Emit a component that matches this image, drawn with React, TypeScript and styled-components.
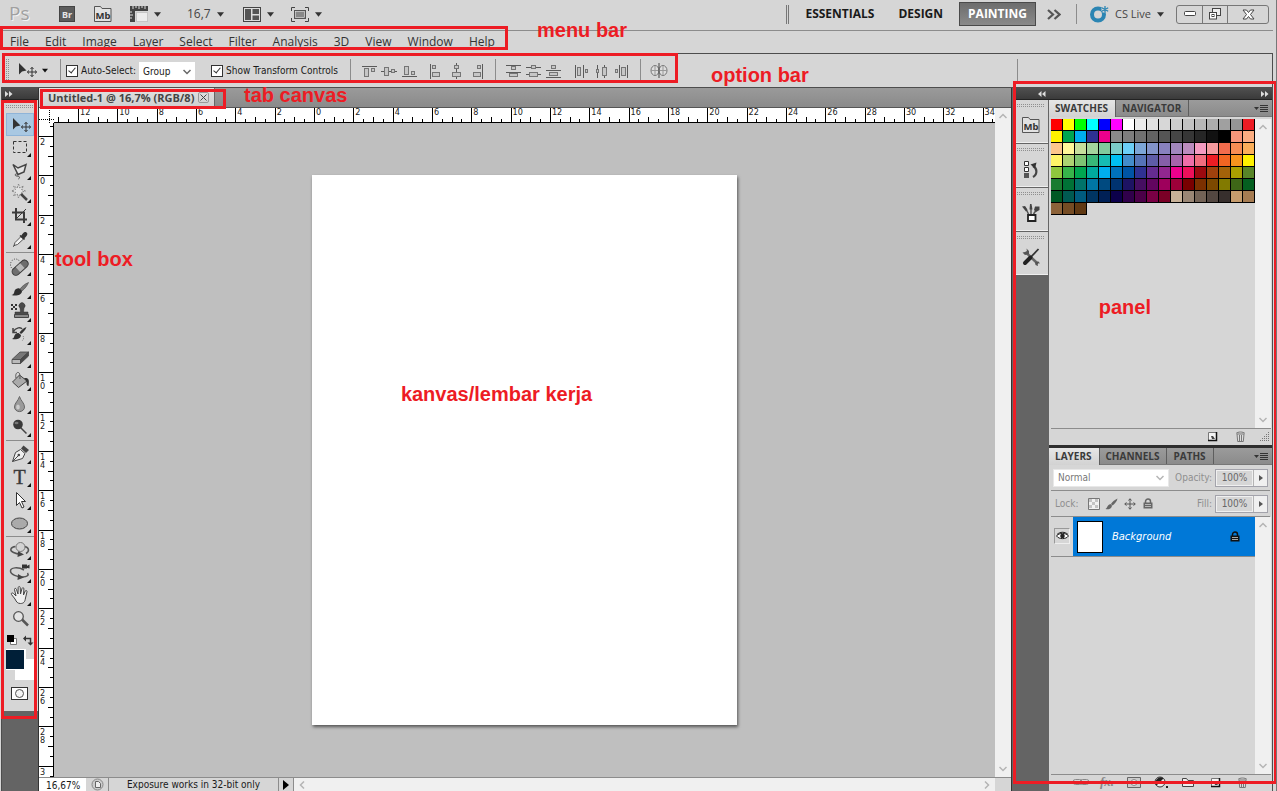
import React from 'react';
import styled, { createGlobalStyle, css } from 'styled-components';

const ui = `'DejaVu Sans Condensed', 'DejaVu Sans', sans-serif`;
const menuFont = `'Open Sans', 'Noto Sans', sans-serif`;
const face = '#d6d6d6';
const line = '#8c8c8c';
const dark = '#4d4d4d';
const mark = '#ed1c24';

const GlobalStyle = createGlobalStyle`
  * { box-sizing: border-box; }
  body { margin: 0; background: ${face}; font-family: ${menuFont}; font-size: 11px; color: #1a1a1a; }
  button, input, select { font: inherit; color: inherit; margin: 0; padding: 0; border: 0; background: none; border-radius: 0; }
  ul { list-style: none; margin: 0; padding: 0; }
  svg { display: block; flex: none; }
`;

/* ---------- frame ---------- */

const Shell = styled.div`
  position: relative;
  height: 100vh;
  min-height: 720px;
  display: flex;
  flex-direction: column;
  padding-right: 3px;
  overflow: hidden;
  background: ${face};
  border-right: 1px solid #777;
`;

const AppBar = styled.header`
  flex: none;
  height: 31px;
  display: flex;
  align-items: center;
  padding: 0 4px 2px 9px;
  border-bottom: 1px solid ${line};
`;

const AppTool = styled.button<{ $gap: number }>`
  display: flex;
  align-items: center;
  gap: 6px;
  margin-left: ${p => p.$gap}px;
  font-size: 12px;
  line-height: 20px;
  color: #444;
`;

const AppLogo = styled.div`
  width: 24px;
  height: 28px;
`;

const Spacer = styled.div`
  flex: 1;
`;

const DoubleRule = styled.div`
  width: 3px;
  height: 19px;
  border: solid #777;
  border-width: 0 1px;
`;

const Workspace = styled.button<{ $active?: boolean }>`
  height: 24px;
  padding: 0 8px 1px;
  margin-left: 8px;
  font-weight: bold;
  font-size: 12px;
  color: ${p => (p.$active ? '#fff' : '#1a1a1a')};
  ${p =>
    p.$active &&
    css`
      background: linear-gradient(#6d6d6d, #8a8a8a);
      border: 1px solid #4a4a4a;
    `}
`;

const IconButton = styled.button<{ $w?: number; $after?: number }>`
  display: flex;
  align-items: center;
  justify-content: center;
  width: ${p => p.$w ?? 20}px;
  margin-right: ${p => p.$after ?? 0}px;
  height: 20px;
`;

const Rule = styled.div<{ $h: number }>`
  width: 1px;
  height: ${p => p.$h}px;
  background: ${line};
`;

const CsLabel = styled.span`
  font-size: 11px;
`;

const WindowControls = styled.div`
  display: flex;
  margin-left: 12px;
  height: 19px;
  border: 1px solid #777;
  border-radius: 3px;
`;

const WindowButton = styled.button<{ $w: number }>`
  width: ${p => p.$w}px;
  display: flex;
  align-items: center;
  justify-content: center;
  & + & {
    border-left: 1px solid #777;
  }
`;

const MenuBar = styled.nav`
  flex: none;
  height: 22px;
  display: flex;
  padding-left: 2px;
`;

const MenuItem = styled.button`
  padding: 0 8px;
  font-size: 12px;
  line-height: 22px;
  color: #333;
`;

/* ---------- option bar ---------- */

const OptionBar = styled.div`
  flex: none;
  height: 34px;
  margin-left: 2px;
  display: flex;
  align-items: center;
  border: solid ${dark};
  border-width: 1px 1px 0 0;
  padding-left: 4px;
  font-family: ${ui};
  font-size: 10px;
`;

const Grip = styled.div<{ $vertical?: boolean }>`
  flex: none;
  width: ${p => (p.$vertical ? 3 : 28)}px;
  height: ${p => (p.$vertical ? 24 : 3)}px;
  background:
    linear-gradient(transparent 1px, ${face} 1px) 0 0 / 2px 2px,
    linear-gradient(90deg, #8f8f8f 1px, transparent 1px) 0 0 / 2px 2px;
`;

const MoveOption = styled.button`
  display: flex;
  align-items: center;
  gap: 4px;
  margin-left: 9px;
  width: 42px;
`;

const OptionRule = styled.div<{ $before?: number; $after?: number }>`
  width: 1px;
  height: 24px;
  background: ${line};
  margin: 0 ${p => p.$after ?? 8}px 0 ${p => p.$before ?? 8}px;
`;

const CheckLabel = styled.label`
  display: flex;
  align-items: center;
  gap: 3px;
  white-space: nowrap;
`;

const CheckInput = styled.input`
  appearance: none;
  width: 12px;
  height: 12px;
  border: 1px solid #333;
  background: #fff;
  display: grid;
  place-items: center;
  &:checked::after {
    content: '';
    width: 3px;
    height: 6px;
    margin-bottom: 2px;
    border: solid #333;
    border-width: 0 1px 1px 0;
    transform: rotate(40deg);
  }
`;

const SelectGap = styled.div`
  margin: 2px 16px 0 3px;
`;

const GroupGap = styled.div`
  width: 8px;
`;

const SelectBox = styled.div<{ $w: number; $h: number }>`
  display: grid;
  align-items: center;
  width: ${p => p.$w}px;
  height: ${p => p.$h}px;
  background: #fff;
  > * {
    grid-area: 1 / 1;
  }
  > svg {
    justify-self: end;
    margin-right: 4px;
    pointer-events: none;
  }
`;

const Select = styled.select<{ $muted?: boolean }>`
  appearance: none;
  width: 100%;
  height: 100%;
  padding: 0 20px 0 4px;
  color: ${p => (p.$muted ? '#777' : '#222')};
`;

const IconGroup = styled.div`
  display: flex;
`;

/* ---------- work area ---------- */

const Work = styled.div`
  flex: 1;
  min-height: 0;
  margin-left: 1px;
  display: flex;
  border: solid ${dark};
  border-width: 1px 1px 0 1px;
  background: #646464;
`;

const DockHeader = styled.div`
  flex: none;
  height: 12px;
  display: flex;
  align-items: center;
  background: linear-gradient(#4f4f4f, #3a3a3a);
  border-bottom: 1px solid #222;
`;

const DockArrow = styled.button`
  height: 11px;
  display: flex;
  align-items: center;
  padding: 0 3px;
`;

const ToolDock = styled.aside`
  flex: none;
  width: 37px;
  border-right: 1px solid #333;
`;

const ToolPanel = styled.div`
  background: ${face};
  padding: 5px 0 0 4px;
  display: flex;
  flex-direction: column;
`;

const ToolList = styled.ul`
  padding-top: 5px;
  & + & {
    margin: 1px 2px 0 0;
    padding-top: 2px;
    border-top: 1px solid ${line};
  }
`;

const ToolButton = styled.button<{ $active?: boolean }>`
  display: block;
  width: 28px;
  height: 23px;
  ${p =>
    p.$active &&
    css`
      background: #a9c8e2;
      box-shadow: inset 0 0 0 1px #8fb4d8;
    `}
`;

const ColorArea = styled.div`
  padding-bottom: 9px;
`;

const Doc = styled.main`
  flex: 1;
  min-width: 0;
  display: flex;
  flex-direction: column;
  border-right: 1px solid #333;
`;

const TabStrip = styled.div`
  flex: none;
  height: 20px;
  display: flex;
  background: linear-gradient(#9a9a9a, #8a8a8a);
  border-bottom: 1px solid #555;
`;

const DocTab = styled.div`
  display: flex;
  align-items: center;
  gap: 4px;
  padding: 0 5px 0 9px;
  background: linear-gradient(#e2e2e2, #cfcfcf);
  border-right: 1px solid #666;
  font-weight: bold;
  color: #444;
`;

const TabClose = styled.button`
  width: 11px;
  height: 11px;
  display: grid;
  place-items: center;
  border: 1px solid #999;
  border-radius: 2px;
`;

const DocBody = styled.div`
  flex: 1;
  min-height: 0;
  display: grid;
  grid-template-columns: 15px minmax(0, 1fr) 16px;
  grid-template-rows: 15px minmax(0, 1fr) 14px;
  grid-template-areas: 'corner top scroll' 'left stage scroll' 'status status status';
`;

const RulerCorner = styled.div`
  grid-area: corner;
  background: #fff;
`;

const Ruler = styled.div<{ $vertical?: boolean }>`
  grid-area: ${p => (p.$vertical ? 'left' : 'top')};
  display: flex;
  flex-direction: ${p => (p.$vertical ? 'column' : 'row')};
  overflow: hidden;
  background: #fff;
  border: 0 solid #000;
  ${p => (p.$vertical ? 'border-right-width: 1px;' : 'border-bottom-width: 1px;')}
  font-family: ${ui};
  font-size: 9px;
  line-height: 8px;
`;

const RulerLead = styled.div<{ $size: number }>`
  flex: none;
  display: flex;
  flex-direction: inherit;
  justify-content: flex-end;
  align-items: flex-end;
  flex-basis: ${p => p.$size}px;
`;

const RulerTrack = styled.div<{ $size: number }>`
  flex: none;
  flex-basis: ${p => p.$size}px;
  display: flex;
  flex-direction: inherit;
`;

const RulerCell = styled.div`
  flex: 1 1 0;
  display: grid;
  flex-direction: inherit;
  > * {
    grid-area: 1 / 1;
  }
`;

const Ticks = styled.div`
  display: flex;
  flex-direction: inherit;
  align-items: flex-end;
`;

const Tick = styled.span<{ $len: number; $vertical?: boolean; $fixed?: boolean }>`
  flex: ${p => (p.$fixed ? '0 0 10px' : '1 1 0')};
  border: 0 solid #000;
  ${p =>
    p.$vertical
      ? css`
          width: ${p.$len}px;
          border-top-width: 1px;
        `
      : css`
          height: ${p.$len}px;
          border-left-width: 1px;
        `}
`;

const RulerNumber = styled.span<{ $vertical?: boolean }>`
  display: flex;
  flex-direction: ${p => (p.$vertical ? 'column' : 'row')};
  padding: ${p => (p.$vertical ? '2px 0 0 1px' : '0 0 0 2px')};
`;

const Stage = styled.div`
  grid-area: stage;
  display: flex;
  align-items: center;
  justify-content: center;
  overflow: hidden;
  background: #bfbfbf;
`;

const Paper = styled.div`
  flex: none;
  width: 425px;
  height: 550px;
  background: #fff;
  box-shadow: 1px 2px 3px rgba(0, 0, 0, 0.55);
  display: flex;
  justify-content: center;
  padding-top: 207px;
`;

const ScrollBar = styled.div<{ $area?: string; $horizontal?: boolean }>`
  ${p => p.$area && `grid-area: ${p.$area};`}
  display: flex;
  flex-direction: ${p => (p.$horizontal ? 'row' : 'column')};
  flex: ${p => (p.$horizontal ? 1 : 'none')};
  width: ${p => (p.$horizontal ? 'auto' : '16px')};
  align-items: center;
  justify-content: space-between;
  padding: ${p => (p.$horizontal ? '0 4px' : '4px 0')};
  background: #f0f0f0;
`;

const StatusBar = styled.footer`
  grid-area: status;
  display: flex;
  border-top: 1px solid ${line};
  background: ${face};
  padding-right: 16px;
  font-family: ${ui};
  font-size: 10px;
`;

const ZoomInput = styled.input`
  width: 47px;
  padding: 1px 0 0 7px;
  background: #fff;
`;

const StatusCell = styled.div<{ $w: number }>`
  display: flex;
  align-items: center;
  justify-content: center;
  width: ${p => p.$w}px;
  border-right: 1px solid ${line};
  white-space: nowrap;
`;

/* ---------- right side ---------- */

const IconDock = styled.aside`
  flex: none;
  width: 35px;
  margin-left: 2px;
  display: flex;
  flex-direction: column;
`;

const IconSlot = styled.div`
  height: 43px;
  margin: 0 1px 1px 0;
  padding: 4px 0 0 3px;
  background: ${face};
  border-bottom: 1px solid #efefef;
`;

const SlotButton = styled.button`
  display: flex;
  width: 28px;
  height: 36px;
  align-items: center;
  justify-content: center;
`;

const Panels = styled.aside`
  flex: none;
  width: 223px;
  display: flex;
  flex-direction: column;
`;

const Panel = styled.section<{ $fill?: boolean }>`
  flex: ${p => (p.$fill ? '1 1 0' : '0 0 345px')};
  min-height: 0;
  display: flex;
  flex-direction: column;
  background: ${face};
  & + & {
    border-top: 3px solid #2e2e2e;
  }
`;

const PanelTabs = styled.div`
  flex: none;
  height: 17px;
  display: flex;
  background: linear-gradient(#9b9b9b, #8b8b8b);
  border-bottom: 1px solid #777;
`;

const PanelTab = styled.button<{ $active?: boolean }>`
  height: ${p => (p.$active ? 17 : 16)}px;
  padding: 0 7px ${p => (p.$active ? 2 : 1)}px 6px;
  font-weight: bold;
  font-size: 10px;
  color: #3a3a3a;
  border-right: 1px solid #5e5e5e;
  background: ${p => (p.$active ? 'linear-gradient(#e6e6e6, #d2d2d2)' : 'none')};
`;

const PanelMenu = styled.button`
  margin-left: auto;
  padding-right: 4px;
`;

const PanelBody = styled.div`
  flex: 1;
  min-height: 0;
  display: flex;
  margin: 2px 1px 0 2px;
  border: solid ${line};
  border-width: 0 0 1px;
`;

const BodyMain = styled.div`
  flex: 1;
  min-width: 0;
`;

const SwatchGrid = styled.div`
  display: grid;
  grid-template-columns: repeat(17, 12px);
  grid-auto-rows: 12px;
`;

const Swatch = styled.button<{ $c: string }>`
  background: ${p => p.$c};
  border: solid #000;
  border-width: 0 1px 1px 0;
`;

const PanelFooter = styled.div<{ $gap: number; $right: number }>`
  flex: none;
  height: 16px;
  display: flex;
  align-items: center;
  justify-content: flex-end;
  gap: ${p => p.$gap}px;
  padding: 0 ${p => p.$right}px 2px 0;
`;

const FootButton = styled.button`
  width: 16px;
  height: 14px;
  display: grid;
  place-items: center;
`;

const LayerRow = styled.div`
  flex: none;
  height: 26px;
  margin: 0 2px;
  display: flex;
  align-items: center;
  justify-content: space-between;
  padding: 0 2px;
  border-bottom: 1px solid ${line};
  font-family: ${ui};
  font-size: 10px;
  color: #8f8f8f;
`;

const BlendBox = styled(SelectBox)`
  border: 1px solid #e8e8e8;
`;

const FieldLabel = styled.label`
  display: flex;
  align-items: center;
  gap: 3px;
`;

const FieldBox = styled.span`
  display: flex;
  height: 18px;
  border: 1px solid #a3a3ab;
  background: #f0f0f0;
`;

const FieldInput = styled.input`
  width: 35px;
  margin: 1px;
  text-align: center;
  background: ${face};
  color: #666;
`;

const StepButton = styled.button`
  width: 14px;
  display: grid;
  place-items: center;
  border-left: 1px solid #b5b5b5;
`;

const LockTools = styled.div`
  display: flex;
  align-items: center;
  gap: 2px;
`;

const LockText = styled.span`
  padding: 0 5px 0 2px;
`;

const LayerArea = styled(PanelBody)`
  margin-top: 0;
`;

const LayerItem = styled.div`
  display: flex;
  height: 40px;
  border-bottom: 1px solid ${line};
`;

const EyeButton = styled.button`
  width: 16px;
  height: 16px;
  margin: 11px 3px 0;
  display: grid;
  place-items: center;
  border: 1px solid #999;
  border-right-color: #eee;
  border-bottom-color: #eee;
`;

const LayerBody = styled.button`
  flex: 1;
  display: flex;
  align-items: center;
  justify-content: space-between;
  background: #0078d7;
  color: #fff;
  padding: 0 15px 0 4px;
  font-family: ${ui};
  font-style: italic;
`;

const LayerName = styled.span`
  display: flex;
  align-items: center;
  gap: 9px;
`;

const Thumb = styled.span`
  width: 26px;
  height: 32px;
  background: #fff;
  border: 1px solid #000;
`;

const Fx = styled.span`
  font: italic bold 13px/12px 'Liberation Serif', serif;
  color: #888;
`;

/* ---------- annotations over the window ---------- */

const Frame = styled.div<{ $x?: number; $right?: number; $y: number; $w: number; $h: number }>`
  position: absolute;
  pointer-events: none;
  top: ${p => p.$y}px;
  ${p => (p.$right !== undefined ? `right: ${p.$right}px;` : `left: ${p.$x}px;`)}
  width: ${p => p.$w}px;
  height: ${p => p.$h}px;
  border: 3px solid ${mark};
`;

const noteText = css`
  font: bold 20px/24px 'Liberation Sans', Arial, sans-serif;
  color: ${mark};
  white-space: nowrap;
`;

const Note = styled.div<{ $x?: number; $right?: number; $y: number }>`
  position: absolute;
  pointer-events: none;
  top: ${p => p.$y}px;
  ${p => (p.$right !== undefined ? `right: ${p.$right}px;` : `left: ${p.$x}px;`)}
  ${noteText}
`;

const PaperNote = styled.div`
  ${noteText}
  padding-right: 56px;
`;

/* ---------- drawings ---------- */

const Down = ({ c = '#333', w = 7 }: { c?: string; w?: number }) => (
  <svg width={w} height="5" viewBox="0 0 8 5">
    <path d="M0 0h8L4 5z" fill={c} />
  </svg>
);

const Chevron = ({ dir, c = '#b4b4b4' }: { dir: 'up' | 'down' | 'left' | 'right'; c?: string }) => {
  const turn = { up: 0, right: 90, down: 180, left: 270 }[dir];
  return (
    <svg width="8" height="8" viewBox="0 0 8 8">
      <path d="M0.5 6L4 2.5 7.500 6" fill="none" stroke={c} strokeWidth="1.5" transform={`rotate(${turn} 4 4)`} />
    </svg>
  );
};

const Twin = ({ left }: { left?: boolean }) => (
  <svg width="8" height="6" viewBox="0 0 8 6">
    <path d={left ? 'M3.500 0v6L0 3zM7.500 0v6L4 3z' : 'M0 0v6l3.500-3zM4 0v6l3.500-3z'} fill="#ddd" />
  </svg>
);

const MoveShape = () => (
  <>
    <path d="M1 0v11.500l3-3 4.500-1z" fill="#333" />
    <path
      d="M14 4.500v9M9.500 9h9M12.500 6L14 4.300 15.500 6M12.500 12l1.500 1.700 1.500-1.700M11 7.500L9.300 9l1.700 1.500M17 7.500L18.700 9 17 10.500"
      fill="none"
      stroke="#333"
      strokeWidth="1"
    />
  </>
);

const tools: Record<string, React.ReactNode> = {
  Move: (
    <g transform="translate(6 5)">
      <MoveShape />
    </g>
  ),
  Marquee: <rect x="7.500" y="5.500" width="13" height="11" fill="none" stroke="#333" strokeDasharray="3 2" />,
  Lasso: (
    <g fill="none" stroke="#444" strokeWidth="1.500">
      <path d="M7 5.500l5 3.500 8-3.500-2 7.500-6 2.500z" fill="#e4e4e4" />
      <path d="M12 15c-3-1-4 2-1 2s3 2 1.500 3" strokeWidth="1" />
    </g>
  ),
  Wand: (
    <g>
      <path d="M12.500 2l1.300 4 3.700-2-2 3.500 4 1.500-4 1.200 2 3.800-3.700-2-1.300 4-1.300-4-3.700 2 2-3.800L5.500 9l4-1.500-2-3.500 3.700 2z" fill="#e2e2e2" stroke="#888" strokeWidth="1" strokeDasharray="2 1" />
      <path d="M15 12l6 6" stroke="#444" strokeWidth="2.500" />
    </g>
  ),
  Crop: (
    <g fill="none" stroke="#3a3a3a" strokeWidth="2">
      <path d="M10 3v11.500h11M6 7.500h12V18" />
      <path d="M10 14l10-10" strokeWidth="1" />
    </g>
  ),
  Eyedropper: (
    <g>
      <path d="M8 17.500l1-3 6-6 2.500 2.500-6 5.500z" fill="#f2f2f2" stroke="#555" strokeWidth="1" />
      <path d="M7 18.500l1.500-1" stroke="#333" />
      <path d="M13.500 8l1-1 1 .5c1-2 3-4.500 5-3s0 4-2 5.500l.5 1-1 1z" fill="#333" />
    </g>
  ),
  'Healing Brush': (
    <g>
      <ellipse cx="9.500" cy="9.500" rx="5" ry="5.500" fill="none" stroke="#444" strokeDasharray="1 1.500" />
      <rect x="4.500" y="9" width="19" height="7.500" rx="3.700" fill="#6e6e6e" stroke="#3c3c3c" transform="rotate(-42 14 12.500)" />
      <rect x="11" y="9.500" width="6" height="6.500" fill="#b8b8b8" transform="rotate(-42 14 12.500)" />
    </g>
  ),
  Brush: (
    <g>
      <path d="M22.500 4.500c-4 1.500-7 4.500-8.500 6.500l2 2c2.500-2 5.500-5.500 6.500-8.500z" fill="#777" stroke="#444" strokeWidth=".6" />
      <path d="M13.500 10.500l2.500 2.500c0 4-6 5.500-10.500 4 2.500-.5 2.500-2 3-4 .8-2 3-3 5-2.500z" fill="#2f2f2f" />
    </g>
  ),
  'Clone Stamp': (
    <g>
      <path d="M5 3h2v2H5zM9 3h2v2H9zM7 5h2v2H7zM5 7h2v2H5zM9 7h2v2H9z" fill="#333" />
      <path d="M14 7a3 3 0 1 1 4 0l-.5 4h4.500v3H9v-3h5.500z" fill="#4a4a4a" stroke="#2e2e2e" strokeWidth=".5" />
      <path d="M8.500 13.500h14v3h-14z" fill="#888" stroke="#444" strokeWidth="1" />
    </g>
  ),
  'History Brush': (
    <g>
      <path d="M7 8c3-5 8-5 9-3M7 4v4.500h4" fill="none" stroke="#444" strokeWidth="1.500" />
      <path d="M20.500 3c-3 1-6 4-7 5.500l1.500 1.500c2-1.500 4.500-4 5.500-7zM12.500 9l2.500 2c0 4-5 5-9 4 2-1 2-2 2.500-3.500.7-1.800 2.500-2.800 4-2.500z" fill="#333" />
      <path d="M17 12c1 1 1 3-1 5" fill="none" stroke="#777" strokeDasharray="1 1" />
    </g>
  ),
  Eraser: (
    <g stroke="#444" strokeWidth=".8">
      <path d="M6 12.500L14 5h8.500l-8 7.500z" fill="#777" />
      <path d="M6 12.500h8.500v4H6z" fill="#bbb" />
      <path d="M14.500 12.500l8-7.500v4l-8 7.500z" fill="#4a4a4a" />
    </g>
  ),
  'Paint Bucket': (
    <g>
      <path d="M6.500 12l7-7 7.500 6-8.500 6.500z" fill="#aaa" stroke="#444" />
      <path d="M10 8c-1-4 1-6 2.500-5.500S14 6 14 9" fill="none" stroke="#555" />
      <path d="M18 8c5-.5 5.500 2 4.500 8-2 0-2-2-2-4.500z" fill="#333" />
    </g>
  ),
  Blur: (
    <g>
      <path d="M13.500 3.500c1 4 5 6.500 5 10.500a5 4.600 0 0 1-10 0c0-4 4-6.500 5-10.500z" fill="#9a9a9a" stroke="#666" />
      <ellipse cx="12" cy="14" rx="1.800" ry="2.500" fill="#ccc" />
    </g>
  ),
  Dodge: (
    <g>
      <path d="M14.500 11.500l6 6" stroke="#444" strokeWidth="1.500" />
      <circle cx="12" cy="8.500" r="4.800" fill="#3a3a3a" />
      <ellipse cx="10.500" cy="7" rx="2" ry="1.300" fill="#777" />
    </g>
  ),
  Pen: (
    <g>
      <path d="M6.500 18.500l3-9 5-3 4.500 4-2.500 5z" fill="#eee" stroke="#444" />
      <path d="M6.500 18.500l6-6" stroke="#444" />
      <circle cx="12.800" cy="12" r="1.300" fill="#444" />
      <path d="M15 5.500l2.500-3 5.500 4.500-3 3z" fill="#444" />
    </g>
  ),
  Type: (
    <text x="13.500" y="18" textAnchor="middle" fontFamily="Liberation Serif, serif" fontSize="20" fill="#3a3a3a" stroke="#3a3a3a" strokeWidth=".4">
      T
    </text>
  ),
  'Path Selection': <path d="M10.500 3.500v13l3-3 2.500 5.500 2-1-2.500-5.500h4z" fill="#fff" stroke="#333" />,
  Ellipse: <ellipse cx="13.500" cy="11.500" rx="8" ry="5.500" fill="#aaa" stroke="#444" />,
  '3D Rotate': (
    <g>
      <path d="M9.500 7.500c-5 .5-6.500 4-2 6 2 .9 4 1.500 6 1.500M18 7.500c5 .5 6 4.500 2 7" fill="none" stroke="#555" strokeWidth="1.500" />
      <path d="M12 12l6 3.500-6.500 2.500z" fill="#444" />
      <circle cx="14.500" cy="8" r="4.500" fill="#d2d2d2" stroke="#777" />
    </g>
  ),
  '3D Orbit': (
    <g>
      <path d="M18 8C12 4.500 4.500 5.500 4.500 9s7 6 12 6 6.500-2 5-4" fill="none" stroke="#555" strokeWidth="1.500" />
      <path d="M12 12l6 3.500-6.500 2.500z" fill="#444" />
      <path d="M16 2.500h5v4h-5zM20 4.500l3.500-2v4L20 5.500z" fill="#333" />
    </g>
  ),
  Hand: (
    <path
      d="M9 14L5.500 9.500c-.8-1.500 1-2 2-1L10 11 8.500 4.500c0-1.500 1.500-1.500 2 0L12 9l.2-6.500c.2-1.300 1.800-1.300 2 0L14.500 9 16 3.500c.5-1.300 2-1 1.900.5L17.500 10l1.700-4c.7-1 2.100-.5 1.800.8L19.500 13c-.5 4-2 5.500-5 5.500S10.500 17 9 14z"
      fill="#efefef"
      stroke="#444"
    />
  ),
  Zoom: (
    <g>
      <path d="M16 11.500l6 6" stroke="#555" strokeWidth="2.500" />
      <circle cx="12.500" cy="8.500" r="4.800" fill="#e4e4e4" stroke="#555" strokeWidth="1.300" />
    </g>
  ),
};

const noFlyout = ['Move', 'Zoom'];

const toolGroups = [
  ['Move', 'Marquee', 'Lasso', 'Wand', 'Crop', 'Eyedropper'],
  ['Healing Brush', 'Brush', 'Clone Stamp', 'History Brush', 'Eraser', 'Paint Bucket', 'Blur', 'Dodge'],
  ['Pen', 'Type', 'Path Selection', 'Ellipse'],
  ['3D Rotate', '3D Orbit', 'Hand', 'Zoom'],
];

const ToolIcon = ({ name }: { name: string }) => (
  <svg width="28" height="23" viewBox="0 0 28 23">
    {tools[name]}
    {!noFlyout.includes(name) && <path d="M25 17v4h-4z" fill="#111" />}
  </svg>
);

const ColorsDrawing = () => (
  <svg width="31" height="71" viewBox="0 0 31 71">
    <path d="M4.500 7.500h6v6h-6z" fill="#fff" stroke="#777" />
    <path d="M1 4h7v7H1z" fill="#000" />
    <path d="M19 7.500h5.500V12" fill="none" stroke="#333" strokeWidth="1.500" />
    <path d="M17 7.500l3-3v6zM24.500 14.500l-3-3h6z" fill="#333" />
    <rect x="9" y="28" width="20" height="21" fill="#fff" />
    <rect x="-1" y="18" width="21" height="21" fill="#fff" />
    <rect x="0" y="19" width="18" height="19" fill="#001f38" />
    <rect x="5.500" y="56.500" width="16" height="12" fill="#fff" stroke="#333" />
    <circle cx="13.500" cy="62.500" r="4" fill="#f6f6f6" stroke="#555" />
  </svg>
);

type Box = [number, number, number, number];
type AlignDef = { name: string; lines: string; boxes: Box[] };

const alignGroups: AlignDef[][] = [
  [
    { name: 'Align top edges', lines: 'M3 5.500h15', boxes: [[5, 7, 5, 9], [12, 7, 4, 4]] },
    { name: 'Align vertical centers', lines: 'M2 10.500h16', boxes: [[5, 6, 5, 9], [12, 8, 4, 4]] },
    { name: 'Align bottom edges', lines: 'M3 15.500h15', boxes: [[5, 5, 5, 9], [12, 10, 4, 4]] },
  ],
  [
    { name: 'Align left edges', lines: 'M3.500 3v15', boxes: [[5, 4, 4, 4], [5, 11, 8, 5]] },
    { name: 'Align horizontal centers', lines: 'M9.500 2v16', boxes: [[7, 4, 5, 4], [5, 11, 9, 5]] },
    { name: 'Align right edges', lines: 'M15.500 3v15', boxes: [[10, 4, 4, 4], [6, 11, 8, 5]] },
  ],
  [
    { name: 'Distribute top edges', lines: 'M2 4.500h15M2 11.500h15', boxes: [[7, 5, 5, 4], [5, 12, 9, 4]] },
    { name: 'Distribute vertical centers', lines: 'M2 6.500h15M2 13.500h15', boxes: [[7, 4, 5, 4], [5, 11, 9, 5]] },
    { name: 'Distribute bottom edges', lines: 'M2 9.500h15M2 16.500h15', boxes: [[7, 4, 5, 4], [5, 11, 9, 4]] },
  ],
  [
    { name: 'Distribute left edges', lines: 'M3.500 4v13M11.500 4v13', boxes: [[5, 6, 4, 9], [13, 8, 3, 4]] },
    { name: 'Distribute horizontal centers', lines: 'M5.500 4v13M12.500 4v13', boxes: [[4, 8, 3, 4], [10, 6, 5, 9]] },
    { name: 'Distribute right edges', lines: 'M7.500 4v13M15.500 4v13', boxes: [[3, 8, 3, 4], [9, 6, 5, 9]] },
  ],
];

const AlignIcon = ({ def }: { def: AlignDef }) => (
  <svg width="20" height="20" viewBox="0 0 20 20">
    <path d={def.lines} stroke="#5a5a5a" fill="none" />
    {def.boxes.map(([x, y, w, h], i) => (
      <rect key={i} x={x + 0.5} y={y + 0.5} width={w - 1} height={h - 1} fill="#c6c6c6" stroke="#757575" />
    ))}
  </svg>
);

const MiniBridge = () => (
  <svg width="18" height="18" viewBox="0 0 18 18">
    <path d="M.5 1.500h6l1.500 2h9v13H.5z" fill="#e2e2e2" stroke="#555" />
    <text x="9" y="14" textAnchor="middle" fontFamily="Noto Sans, sans-serif" fontSize="9.500" fontWeight="bold" fill="#333">
      Mb
    </text>
  </svg>
);

const NewIcon = () => (
  <svg width="11" height="11" viewBox="0 0 11 11">
    <path d="M1.500 1.500h8v8h-8z" fill="#f4f4f4" stroke="#777" />
    <path d="M9.500 1v8.500H1" fill="none" stroke="#111" strokeWidth="1.500" />
    <path d="M4 5h2l2 3H5z" fill="#444" />
  </svg>
);

const TrashIcon = () => (
  <svg width="11" height="12" viewBox="0 0 11 12">
    <path d="M2 4h7l-.7 7.500H2.700z" fill="#ddd" stroke="#777" />
    <path d="M1 3.500c2-2 7-2 9 0M4.500 5v6M6.500 5v6" fill="none" stroke="#777" />
  </svg>
);

const LockIcon = ({ c }: { c: string }) => (
  <svg width="10" height="11" viewBox="0 0 10 11">
    <path d="M2.500 5V3.500a2.500 2.500 0 0 1 5 0V5" fill="none" stroke={c} strokeWidth="1.500" />
    <rect x=".5" y="4.500" width="9" height="6" fill={c} />
    <path d="M2 6.500h6M2 8.500h6" stroke="#ccc" strokeWidth=".8" />
  </svg>
);

const MenuLines = () => (
  <svg width="14" height="9" viewBox="0 0 14 9">
    <path d="M0 3h5L2.500 6z" fill="#333" />
    <path d="M6 1.500h8M6 3.500h8M6 5.500h8M6 7.500h8" stroke="#333" />
  </svg>
);

/* ---------- data ---------- */

const menus = ['File', 'Edit', 'Image', 'Layer', 'Select', 'Filter', 'Analysis', '3D', 'View', 'Window', 'Help'];
const across = [12, 10, 8, 6, 4, 2, 0, 2, 4, 6, 8, 10, 12, 14, 16, 18, 20, 22, 24, 26, 28, 30, 32, 34];
const downward = [2, 0, 2, 4, 6, 8, 10, 12, 14, 16, 18, 20, 22, 24, 26, 28, 3];

const swatches = (
  'ff0000 ffff00 00ff00 00ffff 0000ff ff00ff ffffff ebebeb e1e1e1 d7d7d7 cccccc c2c2c2 b7b7b7 acacac a0a0a0 959595 ed1c24 ' +
  'fff200 00a651 00aeef 2e3192 ec008c 898989 7d7d7d 707070 626262 555555 464646 363636 262626 111111 000000 f7977a fbad82 ' +
  'fdc68c fff799 c6df9c a4d49d 81ca9d 7bcdc9 6ccff7 7ca6d8 8293ca 8881be a286bd bc8cbf f49bc1 f5999d f16c4d f68e54 fbaf5a ' +
  'fff467 acd372 7dc473 39b778 16bcb4 00bff3 438ccb 5573b7 5e5ca7 855fa8 a763a9 ef6ea8 f16d7e ee1d24 f16522 f7941d fff100 ' +
  '8fc63d 37b44a 00a650 00a99e 00aeef 0072bc 0054a5 2f3192 652c91 91278f ed008c ee105a 9d0a0f a1410d a36209 aba000 588528 ' +
  '197b30 007236 00736a 0076a4 004a80 003370 1d1363 450e61 62055f 9e005c 9d0039 790000 7b3000 7c4900 827a00 3e6617 045f20 ' +
  '005824 005951 005b7e 003562 002056 0c004b 30004a 4b0048 7a0045 7a0026 c7b198 998675 736357 534741 372f2d c69c6d a67c52 ' +
  '8c6239 754c24 603913'
).split(' ');

const HorizontalRuler = () => (
  <Ruler>
    <RulerLead $size={24}>
      <Tick $fixed $len={5} />
      <Tick $fixed $len={3} />
    </RulerLead>
    <RulerTrack $size={944}>
      {across.map((n, i) => (
        <RulerCell key={i}>
          <Ticks>
            <Tick $len={14} />
            <Tick $len={3} />
            <Tick $len={5} />
            <Tick $len={3} />
          </Ticks>
          <RulerNumber>{n}</RulerNumber>
        </RulerCell>
      ))}
    </RulerTrack>
  </Ruler>
);

const VerticalRuler = () => (
  <Ruler $vertical>
    <RulerLead $size={13}>
      <Tick $fixed $vertical $len={3} />
    </RulerLead>
    <RulerTrack $size={669}>
      {downward.map((n, i) => (
        <RulerCell key={i}>
          <Ticks>
            <Tick $vertical $len={14} />
            <Tick $vertical $len={3} />
            <Tick $vertical $len={5} />
            <Tick $vertical $len={3} />
          </Ticks>
          <RulerNumber $vertical>
            {String(n).split('').map((d, k) => (
              <span key={k}>{d}</span>
            ))}
          </RulerNumber>
        </RulerCell>
      ))}
    </RulerTrack>
  </Ruler>
);

/* ---------- sections ---------- */

const TopBar = () => (
  <AppBar>
    <AppLogo>
      <svg width="28" height="28" viewBox="0 0 28 28">
        <text x="1" y="21" fontFamily="Open Sans, sans-serif" fontSize="19" fill="#f4f4f4">Ps</text>
        <text x="0" y="20" fontFamily="Open Sans, sans-serif" fontSize="19" fill="#a0a0a0">Ps</text>
      </svg>
    </AppLogo>
    <AppTool $gap={26} aria-label="Launch Bridge">
      <svg width="16" height="16" viewBox="0 0 16 16">
        <rect x=".5" y=".5" width="15" height="15" fill="#5c5c5c" stroke="#444" />
        <text x="8" y="12" textAnchor="middle" fontFamily="Noto Sans, sans-serif" fontWeight="bold" fontSize="9" fill="#e6e6e6">Br</text>
      </svg>
    </AppTool>
    <AppTool $gap={19} aria-label="Launch Mini Bridge">
      <MiniBridge />
    </AppTool>
    <AppTool $gap={18} aria-label="View extras">
      <svg width="18" height="16" viewBox="0 0 18 16">
        <path d="M0 0h18v5H5v11H0z" fill="#444" />
        <path d="M3 0v3M6 0v2M9 0v3M12 0v2M15 0v3M0 6h2M0 9h3M0 12h2" stroke="#ddd" />
        <path d="M6.500 6.500h11v9h-11z" fill="#ececec" stroke="#aaa" strokeDasharray="1 1" />
      </svg>
      <Down />
    </AppTool>
    <AppTool $gap={26}>
      16,7 <Down />
    </AppTool>
    <AppTool $gap={19} aria-label="Arrange documents">
      <svg width="18" height="15" viewBox="0 0 18 15">
        <rect x=".5" y=".5" width="17" height="14" fill="#ddd" stroke="#444" />
        <path d="M2 2h6v11H2zM9.500 2H16v5H9.500zM9.500 8.500H16V13H9.500z" fill="#555" />
      </svg>
      <Down />
    </AppTool>
    <AppTool $gap={17} aria-label="Screen mode">
      <svg width="18" height="15" viewBox="0 0 18 15">
        <path d="M.5 4V.5H4M14 .5h3.500V4M17.500 11v3.500H14M4 14.500H.5V11" fill="none" stroke="#444" />
        <rect x="3" y="3" width="12" height="9" fill="#555" />
        <rect x="4.500" y="4.500" width="9" height="6" fill="#888" stroke="#ddd" strokeWidth=".7" />
      </svg>
      <Down />
    </AppTool>
    <Spacer />
    <DoubleRule />
    <Workspace>ESSENTIALS</Workspace>
    <Workspace>DESIGN</Workspace>
    <Workspace $active>PAINTING</Workspace>
    <IconButton $w={36} $after={4} aria-label="More workspaces">
      <svg width="14" height="11" viewBox="0 0 14 11">
        <path d="M1 1l5 4.500L1 10M7.500 1l5 4.500-5 4.500" fill="none" stroke="#555" strokeWidth="2.200" />
      </svg>
    </IconButton>
    <Rule $h={20} />
    <AppTool $gap={12}>
      <svg width="20" height="18" viewBox="0 0 20 18">
        <circle cx="9" cy="9.500" r="6" fill="none" stroke="#2b85b3" strokeWidth="4" />
        <path d="M16 1v7M12.800 2.800l6.400 3.400M19.200 2.800l-6.400 3.400" stroke={face} strokeWidth="3" />
        <path d="M16 1v7M12.800 2.800l6.400 3.400M19.200 2.800l-6.400 3.400" stroke="#2b85b3" strokeWidth="1.300" />
      </svg>
      <CsLabel>CS Live</CsLabel>
      <Down />
    </AppTool>
    <WindowControls>
      <WindowButton $w={25} aria-label="Minimize">
        <svg width="12" height="6" viewBox="0 0 12 6"><rect x=".5" y=".5" width="11" height="4" rx="1" fill="#fff" stroke="#444" /></svg>
      </WindowButton>
      <WindowButton $w={25} aria-label="Restore">
        <svg width="12" height="12" viewBox="0 0 12 12">
          <rect x="3.500" y=".5" width="8" height="7" fill="#eee" stroke="#444" />
          <rect x=".5" y="4.500" width="7" height="6.500" fill="#fff" stroke="#444" />
          <rect x="3" y="6.500" width="2" height="2" fill="none" stroke="#444" />
        </svg>
      </WindowButton>
      <WindowButton $w={41} aria-label="Close">
        <svg width="13" height="11" viewBox="0 0 13 11">
          <path d="M1 1h3.500l2 2.500L8.500 1H12L8.500 5.500 12 10H8.500l-2-2.500-2 2.500H1l3.500-4.500z" fill="#fff" stroke="#444" />
        </svg>
      </WindowButton>
    </WindowControls>
  </AppBar>
);

const Options = () => (
  <OptionBar>
    <Grip $vertical />
    <MoveOption aria-label="Move tool presets">
      <svg width="20" height="15" viewBox="0 0 20 15"><MoveShape /></svg>
      <Down c="#111" w={6} />
    </MoveOption>
    <OptionRule $before={0} $after={5} />
    <CheckLabel>
      <CheckInput type="checkbox" defaultChecked />
      Auto-Select:
    </CheckLabel>
    <SelectGap>
      <SelectBox $w={56} $h={20}>
        <Select aria-label="Auto-select target" defaultValue="Group">
          <option>Group</option>
          <option>Layer</option>
        </Select>
        <Chevron dir="down" c="#666" />
      </SelectBox>
    </SelectGap>
    <CheckLabel>
      <CheckInput type="checkbox" defaultChecked />
      Show Transform Controls
    </CheckLabel>
    <OptionRule $before={12} />
    {alignGroups.map((g, i) => (
      <React.Fragment key={i}>
        {i === 2 && <OptionRule />}
        <IconGroup>
          {g.map(d => (
            <IconButton key={d.name} aria-label={d.name}>
              <AlignIcon def={d} />
            </IconButton>
          ))}
        </IconGroup>
        {i % 2 === 0 && <GroupGap />}
      </React.Fragment>
    ))}
    <OptionRule />
    <IconButton aria-label="Auto-align layers">
      <svg width="18" height="16" viewBox="0 0 18 16">
        <ellipse cx="5" cy="7.500" rx="4" ry="5" fill="#ddd" stroke="#777" />
        <ellipse cx="13" cy="7.500" rx="4" ry="5" fill="#ddd" stroke="#777" />
        <path d="M9 0v15" stroke="#444" />
        <path d="M1 7.500h7M5 3v9M10 7.500h7M13 3v9" stroke="#999" />
      </svg>
    </IconButton>
    <Spacer />
    <OptionRule $after={254} />
  </OptionBar>
);

const Toolbox = () => (
  <ToolDock>
    <DockHeader>
      <DockArrow aria-label="Expand tools"><Twin /></DockArrow>
    </DockHeader>
    <ToolPanel>
      <Grip />
      {toolGroups.map((g, i) => (
        <ToolList key={i}>
          {g.map(t => (
            <li key={t}>
              <ToolButton $active={t === 'Move'} aria-label={t}>
                <ToolIcon name={t} />
              </ToolButton>
            </li>
          ))}
        </ToolList>
      ))}
      <ColorArea>
        <ColorsDrawing />
      </ColorArea>
    </ToolPanel>
  </ToolDock>
);

const Document = () => (
  <Doc>
    <TabStrip>
      <DocTab>
        <span>Untitled-1 @ 16,7% (RGB/8)</span>
        <TabClose aria-label="Close document">
          <svg width="7" height="7" viewBox="0 0 7 7"><path d="M.5.5l6 6M6.500.5l-6 6" stroke="#444" /></svg>
        </TabClose>
      </DocTab>
    </TabStrip>
    <DocBody>
      <RulerCorner>
        <svg width="15" height="15" viewBox="0 0 15 15">
          <path d="M0 11.500h15M10.500 0v15" stroke="#000" strokeDasharray="1 1" />
        </svg>
      </RulerCorner>
      <HorizontalRuler />
      <VerticalRuler />
      <Stage>
        <Paper>
          <PaperNote>kanvas/lembar kerja</PaperNote>
        </Paper>
      </Stage>
      <ScrollBar $area="scroll">
        <Chevron dir="up" />
        <Chevron dir="down" />
      </ScrollBar>
      <StatusBar>
        <ZoomInput aria-label="Zoom level" defaultValue="16,67%" />
        <StatusCell $w={23}>
          <svg width="13" height="13" viewBox="0 0 13 13">
            <circle cx="6.500" cy="6.500" r="5.500" fill="#ccc" stroke="#888" />
            <path d="M4.500 3.500h3l2 2v4h-5z" fill="#eee" stroke="#666" />
          </svg>
        </StatusCell>
        <StatusCell $w={170}>Exposure works in 32-bit only</StatusCell>
        <StatusCell $w={15}>
          <svg width="6" height="10" viewBox="0 0 6 10"><path d="M0 0l6 5-6 5z" fill="#000" /></svg>
        </StatusCell>
        <ScrollBar $horizontal>
          <Chevron dir="left" />
          <Chevron dir="right" />
        </ScrollBar>
      </StatusBar>
    </DocBody>
  </Doc>
);

const slotIcons: [string, React.ReactNode][] = [
  ['Mini Bridge', <MiniBridge key="m" />],
  [
    'History',
    <svg key="h" width="18" height="18" viewBox="0 0 18 18">
      <path d="M2.500 1.500h4v4h-4zM2.500 7.500h4v4h-4z" fill="#fff" stroke="#333" />
      <path d="M2 13h5v5H2z" fill="#555" />
      <path d="M11 17c5-3 4-9 0-11" fill="none" stroke="#444" strokeWidth="2.200" />
      <path d="M8.500 4.500l6-2-1.500 6z" fill="#333" />
    </svg>,
  ],
  [
    'Brushes',
    <svg key="b" width="18" height="18" viewBox="0 0 18 18">
      <path d="M6.500 10L3 3M9 10V2M11.500 10l3.500-5" stroke="#555" strokeWidth="1.500" />
      <path d="M0 2.500l3-.5 2.500 4-1.500 1.500zM8 0h1.500l1 5.500h-3zM13 2.500l4.500 0v3.500l-3.500 2-2-2z" fill="#444" />
      <path d="M6 11h7.500v6H6z" fill="#fff" stroke="#222" strokeWidth="1.800" />
    </svg>,
  ],
  [
    'Tool Presets',
    <svg key="t" width="18" height="18" viewBox="0 0 18 18">
      <path d="M3.500 4L15 15" stroke="#666" strokeWidth="2.500" />
      <path d="M.5 4.500L3 7l4-1V3L4.500.5l.5 3-2 .5zM13 14l3.500-.5 1.500 2-1.500-.3-.8 1 .3 1.800-2.500-1z" fill="#555" />
      <path d="M16.500 1L8.500 9.500" stroke="#333" strokeWidth="1.800" />
      <path d="M8.500 9.500L3 15" stroke="#222" strokeWidth="4" strokeLinecap="round" />
    </svg>,
  ],
];

const StepArrow = () => (
  <svg width="4" height="6" viewBox="0 0 4 6"><path d="M0 0l4 3-4 3z" fill="#555" /></svg>
);

const RightDock = () => (
  <>
    <IconDock>
      <DockHeader>
        <Spacer />
        <DockArrow aria-label="Expand icon panels"><Twin left /></DockArrow>
      </DockHeader>
      {slotIcons.map(([n, icon]) => (
        <IconSlot key={n}>
          <Grip />
          <SlotButton aria-label={n}>{icon}</SlotButton>
        </IconSlot>
      ))}
    </IconDock>
    <Panels>
      <DockHeader>
        <Spacer />
        <DockArrow aria-label="Collapse panels"><Twin /></DockArrow>
      </DockHeader>
      <Panel>
        <PanelTabs>
          <PanelTab $active>SWATCHES</PanelTab>
          <PanelTab>NAVIGATOR</PanelTab>
          <PanelMenu aria-label="Swatches menu"><MenuLines /></PanelMenu>
        </PanelTabs>
        <PanelBody>
          <BodyMain>
            <SwatchGrid>
              {swatches.map((c, i) => (
                <Swatch key={i} $c={`#${c}`} aria-label={`#${c}`} />
              ))}
            </SwatchGrid>
          </BodyMain>
          <ScrollBar>
            <Chevron dir="up" />
            <Chevron dir="down" />
          </ScrollBar>
        </PanelBody>
        <PanelFooter $gap={12} $right={2}>
          <FootButton aria-label="New swatch"><NewIcon /></FootButton>
          <FootButton aria-label="Delete swatch"><TrashIcon /></FootButton>
          <svg width="10" height="12" viewBox="0 0 10 12">
            <path d="M8 2.500h1M6 4.500h1M8 4.500h1M4 6.500h1M6 6.500h1M8 6.500h1M2 8.500h1M4 8.500h1M6 8.500h1M8 8.500h1M0 10.500h1M2 10.500h1M4 10.500h1M6 10.500h1M8 10.500h1" stroke="#777" />
          </svg>
        </PanelFooter>
      </Panel>
      <Panel $fill>
        <PanelTabs>
          <PanelTab $active>LAYERS</PanelTab>
          <PanelTab>CHANNELS</PanelTab>
          <PanelTab>PATHS</PanelTab>
          <PanelMenu aria-label="Layers menu"><MenuLines /></PanelMenu>
        </PanelTabs>
        <LayerRow>
          <BlendBox $w={116} $h={18}>
            <Select $muted aria-label="Blend mode" defaultValue="Normal">
              <option>Normal</option>
              <option>Multiply</option>
            </Select>
            <Chevron dir="down" />
          </BlendBox>
          <FieldLabel>
            Opacity:
            <FieldBox>
              <FieldInput defaultValue="100%" />
              <StepButton aria-label="Opacity slider"><StepArrow /></StepButton>
            </FieldBox>
          </FieldLabel>
        </LayerRow>
        <LayerRow>
          <LockTools>
            <LockText>Lock:</LockText>
            <FootButton aria-label="Lock transparency">
              <svg width="12" height="12" viewBox="0 0 12 12">
                <path d="M.5.5h11v11H.5z" fill="#f2f2f2" stroke="#777" />
                <path d="M1 1h3v3H1zM7 1h3v3H7zM4 4h3v3H4zM1 7h3v3H1zM7 7h3v3H7z" fill="#c4c4c4" />
              </svg>
            </FootButton>
            <FootButton aria-label="Lock pixels">
              <svg width="13" height="12" viewBox="0 0 13 12">
                <path d="M12.500.5C9.500 2 7 4 6 6l1.500 1.500c2-1.500 4.500-4 5-7zM5.500 6L7 7.500C7 10.500 4 12 .5 11 2.500 10 2 7 5.500 6z" fill="#666" />
              </svg>
            </FootButton>
            <FootButton aria-label="Lock position">
              <svg width="12" height="12" viewBox="0 0 12 12">
                <path d="M6 1v10M1 6h10M4.500 2.500L6 .7l1.500 1.800M4.500 9.500L6 11.300l1.500-1.800M2.500 4.500L.7 6l1.800 1.500M9.500 4.500L11.300 6 9.500 7.500" fill="none" stroke="#555" />
              </svg>
            </FootButton>
            <FootButton aria-label="Lock all"><LockIcon c="#666" /></FootButton>
          </LockTools>
          <FieldLabel>
            Fill:
            <FieldBox>
              <FieldInput defaultValue="100%" />
              <StepButton aria-label="Fill slider"><StepArrow /></StepButton>
            </FieldBox>
          </FieldLabel>
        </LayerRow>
        <LayerArea>
          <BodyMain>
            <LayerItem>
              <EyeButton aria-label="Layer visibility">
                <svg width="13" height="10" viewBox="0 0 13 10">
                  <path d="M.5 5C3 1.500 10 1.500 12.500 5 10 8.500 3 8.500.5 5z" fill="#fff" stroke="#222" />
                  <circle cx="6.500" cy="5" r="2.300" fill="#222" />
                  <path d="M1 3.500C4 .5 9 .5 12 3.500" fill="none" stroke="#222" />
                </svg>
              </EyeButton>
              <LayerBody>
                <LayerName>
                  <Thumb />
                  Background
                </LayerName>
                <LockIcon c="#111" />
              </LayerBody>
            </LayerItem>
          </BodyMain>
          <ScrollBar>
            <Chevron dir="up" />
            <Chevron dir="down" />
          </ScrollBar>
        </LayerArea>
        <PanelFooter $gap={11} $right={22}>
          <FootButton aria-label="Link layers">
            <svg width="18" height="8" viewBox="0 0 18 8">
              <path d="M3.500 1.500h4a2 2 0 0 1 0 5h-4a2 2 0 0 1 0-5zM10.500 1.500h4a2 2 0 0 1 0 5h-4a2 2 0 0 1 0-5zM6 4h6" fill="none" stroke="#888" />
            </svg>
          </FootButton>
          <FootButton aria-label="Layer style"><Fx>fx.</Fx></FootButton>
          <FootButton aria-label="Add mask">
            <svg width="14" height="11" viewBox="0 0 14 11">
              <path d="M.5.500h13v10H.5z" fill="#ccc" stroke="#666" />
              <circle cx="7" cy="5.500" r="3" fill="#eee" stroke="#888" />
            </svg>
          </FootButton>
          <FootButton aria-label="Adjustment layer">
            <svg width="15" height="12" viewBox="0 0 15 12">
              <circle cx="6" cy="6" r="5" fill="#eee" stroke="#333" />
              <path d="M2.500 9.500a5 5 0 0 1 7-7z" fill="#222" />
              <path d="M12 10h2v2h-2z" fill="#222" />
            </svg>
          </FootButton>
          <FootButton aria-label="New group">
            <svg width="12" height="10" viewBox="0 0 12 10">
              <path d="M.5 9.500v-8h4l1.500 2h5.500v6z" fill="#eee" stroke="#444" />
            </svg>
          </FootButton>
          <FootButton aria-label="New layer"><NewIcon /></FootButton>
          <FootButton aria-label="Delete layer"><TrashIcon /></FootButton>
        </PanelFooter>
      </Panel>
    </Panels>
  </>
);

export default function App() {
  return (
    <>
      <GlobalStyle />
      <Shell>
        <TopBar />
        <MenuBar>
          {menus.map(m => (
            <MenuItem key={m}>{m}</MenuItem>
          ))}
        </MenuBar>
        <Options />
        <Work>
          <Toolbox />
          <Document />
          <RightDock />
        </Work>

        <Frame $x={0} $y={26} $w={508} $h={24} />
        <Frame $x={2} $y={53} $w={676} $h={30} />
        <Frame $x={1} $y={100} $w={36} $h={619} />
        <Frame $x={40} $y={89} $w={186} $h={20} />
        <Frame $right={-1} $y={81} $w={264} $h={703} />
        <Note $x={537} $y={18}>menu bar</Note>
        <Note $x={711} $y={63}>option bar</Note>
        <Note $x={244} $y={83}>tab canvas</Note>
        <Note $x={55} $y={247}>tool box</Note>
        <Note $right={125} $y={295}>panel</Note>
      </Shell>
    </>
  );
}
